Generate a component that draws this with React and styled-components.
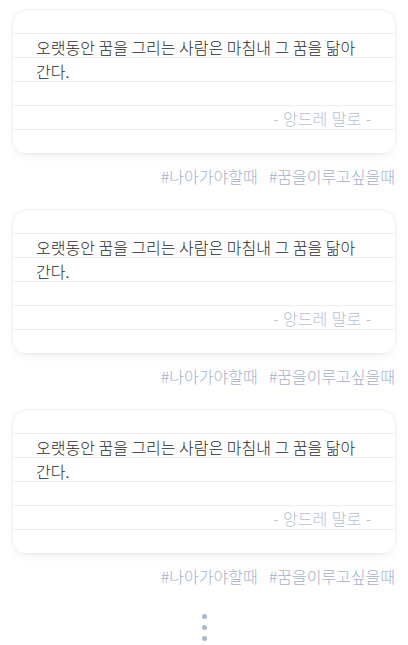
import styled, { createGlobalStyle } from "styled-components"

const GlobalStyle = createGlobalStyle`
    body {
        margin: 0;
        background: #ffffff;
        font-family: "Noto Sans CJK KR", "Noto Sans", sans-serif;
    }
`

const StyledPage = styled.div`
    display: flex;
    flex-direction: column;
    padding: 10px 13px 0;
`

const StyledBlock = styled.section`
    display: flex;
    flex-direction: column;
    margin-bottom: 22px;
`

const StyledCard = styled.div`
    display: flex;
    flex-direction: column;
    padding: 24px 24px 24px 23px;
    border-radius: 14px;
    background-color: #ffffff;
    background-image: repeating-linear-gradient(
        to bottom,
        transparent 0,
        transparent 23px,
        #ededf0 23px,
        #ededf0 24px
    );
    box-shadow: 0 0 0 1px #f1f1f3, 0 3px 8px rgba(0, 0, 0, 0.05);
`

const StyledQuote = styled.p`
    margin: 0;
    padding-top: 1px;
    font-size: 16px;
    font-weight: 300;
    line-height: 24px;
    color: #2b2b2b;
    min-height: 71px;
`

const StyledAuthor = styled.p`
    margin: 0;
    font-size: 16px;
    font-weight: 300;
    line-height: 24px;
    color: #b4bfd8;
    text-align: right;
    word-spacing: 1px;
`

const StyledTags = styled.div`
    display: flex;
    justify-content: flex-end;
    gap: 11px;
    margin-top: 10px;
    font-size: 16px;
    font-weight: 300;
    line-height: 24px;
    color: #a3b1cd;
`

const StyledMore = styled.div`
    display: flex;
    flex-direction: column;
    align-items: center;
    gap: 6px;
    padding-top: 4px;
`

const StyledDot = styled.span`
    width: 5px;
    height: 5px;
    border-radius: 50%;
    background-color: #abb7d1;
`

const quotes = [
    {
        text: "오랫동안 꿈을 그리는 사람은 마침내 그 꿈을 닮아 간다.",
        author: "앙드레 말로",
        tags: ["나아가야할때", "꿈을이루고싶을때"],
    },
    {
        text: "오랫동안 꿈을 그리는 사람은 마침내 그 꿈을 닮아 간다.",
        author: "앙드레 말로",
        tags: ["나아가야할때", "꿈을이루고싶을때"],
    },
    {
        text: "오랫동안 꿈을 그리는 사람은 마침내 그 꿈을 닮아 간다.",
        author: "앙드레 말로",
        tags: ["나아가야할때", "꿈을이루고싶을때"],
    },
]

export default function App() {
    return (
        <>
            <GlobalStyle />
            <StyledPage>
                {quotes.map((q, i) => (
                    <StyledBlock key={i}>
                        <StyledCard>
                            <StyledQuote>{q.text}</StyledQuote>
                            <StyledAuthor>- {q.author} -</StyledAuthor>
                        </StyledCard>
                        <StyledTags>
                            {q.tags.map((t) => (
                                <span key={t}>#{t}</span>
                            ))}
                        </StyledTags>
                    </StyledBlock>
                ))}
                <StyledMore>
                    <StyledDot />
                    <StyledDot />
                    <StyledDot />
                </StyledMore>
            </StyledPage>
        </>
    )
}
